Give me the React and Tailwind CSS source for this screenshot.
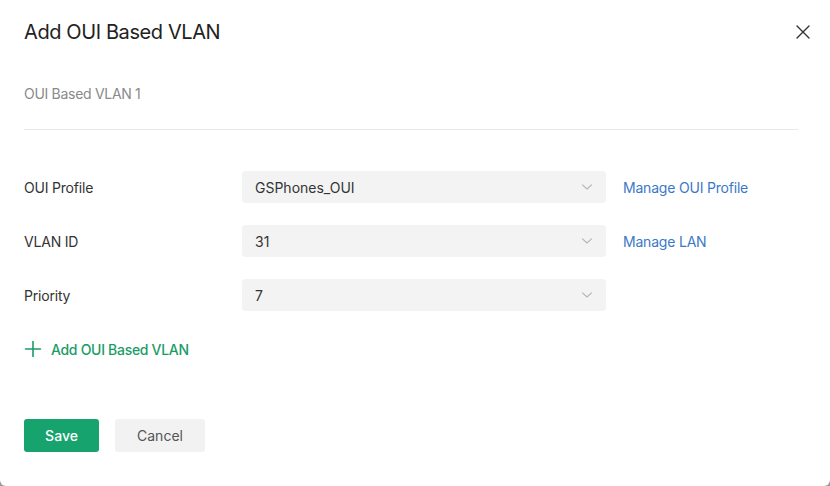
import React from "react";

function Chevron() {
  return (
    <svg width="12" height="8" viewBox="0 0 12 8" fill="none" className="shrink-0">
      <path d="M1.5 1.8 L6 6 L10.5 1.8" stroke="#b5b5b5" strokeWidth="1.1" strokeLinecap="round" strokeLinejoin="round" />
    </svg>
  );
}

function SelectBox({ value }) {
  return (
    <div className="w-[364px] h-[32px] rounded-[4px] bg-[#f3f3f3] flex items-center justify-between pl-[13px] pr-[13px]">
      <span className="text-[14px] text-[#333333]">{value}</span>
      <Chevron />
    </div>
  );
}

function Row({ label, value, link }) {
  return (
    <div className="flex items-center h-[32px]">
      <div className="w-[218px] text-[14px] text-[#333333] tracking-[-0.2px]">{label}</div>
      <SelectBox value={value} />
      {link && (
        <a className="ml-[17px] text-[14px] text-[#3b78c8] cursor-pointer tracking-[-0.2px]">{link}</a>
      )}
    </div>
  );
}

export default function App() {
  return (
    <div
      className="w-[830px] h-[486px] bg-[#9a9a9a] overflow-hidden"
      style={{ fontFamily: "Inter, 'Noto Sans', sans-serif" }}
    >
      <div className="w-[830px] h-[486px] bg-white rounded-b-[6px] flex flex-col px-6">
        <div className="flex items-center justify-between pt-[18px]">
          <h1 className="text-[20px] leading-[28px] text-[#222222] font-normal tracking-[-0.4px]">
            Add OUI Based VLAN
          </h1>
          <button className="mr-[-7px] w-[20px] h-[20px] flex items-center justify-center">
            <svg width="14" height="14" viewBox="0 0 14 14" fill="none">
              <path d="M1 1 L13 13 M13 1 L1 13" stroke="#333333" strokeWidth="1.4" strokeLinecap="round" />
            </svg>
          </button>
        </div>

        <div className="mt-[38px] text-[14px] leading-[20px] text-[#8a8a8a] tracking-[-0.3px]">
          OUI Based VLAN 1
        </div>

        <div className="mt-[25px] h-px bg-[#e8e8e8] w-[774px]" />

        <div className="mt-[41px] flex flex-col gap-[22px]">
          <Row label="OUI Profile" value="GSPhones_OUI" link="Manage OUI Profile" />
          <Row label="VLAN ID" value="31" link="Manage LAN" />
          <Row label="Priority" value="7" />
        </div>

        <div className="mt-[28px] flex items-center h-[20px] text-[#1a9c68] cursor-pointer">
          <svg width="18" height="18" viewBox="0 0 18 18" fill="none">
            <path d="M9 1.5 V16.5 M1.5 9 H16.5" stroke="#1a9c68" strokeWidth="1.6" strokeLinecap="round" />
          </svg>
          <span className="ml-[9px] text-[14px] font-medium tracking-[-0.3px]">Add OUI Based VLAN</span>
        </div>

        <div className="mt-[60px] flex items-center gap-4">
          <button className="w-[75px] h-[33px] rounded-[3px] bg-[#16a36d] text-white text-[14px] font-medium">
            Save
          </button>
          <button className="w-[90px] h-[33px] rounded-[3px] bg-[#f2f2f2] text-[#555555] text-[14px]">
            Cancel
          </button>
        </div>
      </div>
    </div>
  );
}
